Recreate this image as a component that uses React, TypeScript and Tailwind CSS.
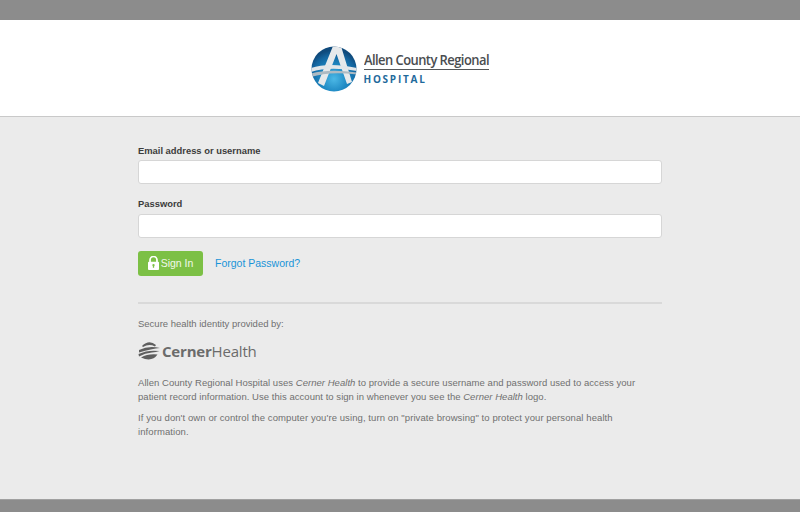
import React from "react";

function HospitalMark() {
  return (
    <svg width="46" height="46" viewBox="0 0 46 46" className="shrink-0">
      <defs>
        <radialGradient id="ball" cx="50%" cy="72%" r="64%">
          <stop offset="0%" stopColor="#4cb8e6" />
          <stop offset="45%" stopColor="#1f8ac4" />
          <stop offset="82%" stopColor="#14659f" />
          <stop offset="100%" stopColor="#0f4a7c" />
        </radialGradient>
        <clipPath id="c"><circle cx="23" cy="23" r="22.5" /></clipPath>
      </defs>
      <circle cx="23" cy="23" r="22.5" fill="url(#ball)" />
      <g clipPath="url(#c)">
        <path d="M22 0 L30 0 L41 36 L36 38 L25.5 8 L13 40 L7 37 Z" fill="#e6e9eb" />
        <path d="M0 22 Q18 16 46 22 L46 25 Q18 20 0 26 Z" fill="#e2e6e9" />
        <path d="M0 27.5 Q18 22.5 46 26.5 L46 28.5 Q18 25 0 31 Z" fill="#aebac2" />
      </g>
    </svg>
  );
}

function CernerMark() {
  return (
    <svg width="22" height="20" viewBox="0 0 22 20" className="shrink-0">
      <path d="M4 5 Q11 -2 18 4 L17 5.5 Q11 2.5 5 6 Z" fill="#5f5f5f" />
      <path d="M1 9 Q11 4 22 7 Q14 7.5 1 11.5 Z" fill="#5f5f5f" />
      <path d="M0.5 13 Q10 8.5 21.5 10 Q18 11 14 11.5 Q7 12 1 15.5 Z" fill="#5f5f5f" />
      <path d="M3 16.5 Q10 12.5 19.5 13.5 Q14 21.5 3 16.5 Z" fill="#5f5f5f" />
    </svg>
  );
}

function LockIcon() {
  return (
    <svg width="11" height="14" viewBox="0 0 12 15" className="-mt-px shrink-0">
      <path d="M2.2 7V4.2a3.8 3.8 0 0 1 7.6 0V7" fill="none" stroke="#fff" strokeWidth="1.9" />
      <path fillRule="evenodd" d="M1 6.2h10a1 1 0 0 1 1 1V14a1 1 0 0 1-1 1H1a1 1 0 0 1-1-1V7.2a1 1 0 0 1 1-1ZM6 8.6a1.3 1.3 0 0 0-.7 2.4v1.8h1.4V11A1.3 1.3 0 0 0 6 8.6Z" fill="#fff" />
    </svg>
  );
}

export default function App() {
  return (
    <div className="flex h-[512px] w-[800px] flex-col overflow-hidden bg-[#ebebeb] font-['Liberation_Sans',Arial,sans-serif]">
      <div className="h-5 shrink-0 bg-[#8c8c8c]" />
      <header className="flex h-[97px] shrink-0 items-start justify-center border-b border-[#c9c9c9] bg-white pt-[26px]">
        <div className="flex items-start gap-[7px]">
          <HospitalMark />
          <div className="flex w-[126px] flex-col pt-[5px]">
            <span className="origin-left scale-x-[0.925] whitespace-nowrap font-['Open_Sans',sans-serif] text-[14px] leading-[17px] font-semibold tracking-[-0.6px] text-[#4a4d50]">
              Allen County Regional
            </span>
            <div className="mt-px h-px w-[125px] bg-[#55585a]" />
            <span className="mt-[3px] font-['Open_Sans',sans-serif] text-[10px] leading-[12px] font-bold tracking-[1.75px] text-[#1f6a9c]">
              HOSPITAL
            </span>
          </div>
        </div>
      </header>

      <main className="flex min-h-0 flex-1 justify-center">
        <div className="flex w-[524px] flex-col pt-[27px]">
          <label className="text-[9.4px] leading-[13px] font-bold text-[#3c3c3c]">Email address or username</label>
          <input className="mt-[3px] h-[24px] w-full rounded-[3px] border border-[#d6d6d6] bg-white" />
          <label className="mt-[13px] text-[9.4px] leading-[13px] font-bold text-[#3c3c3c]">Password</label>
          <input type="password" className="mt-[4px] h-[24px] w-full rounded-[3px] border border-[#d6d6d6] bg-white" />

          <div className="mt-[13px] flex items-center gap-3">
            <button className="flex h-[25px] w-[65px] items-center justify-center gap-[2px] rounded-[3px] bg-[#7cc045] text-[10.5px] text-[#f1f8ea]">
              <LockIcon />
              <span>Sign In</span>
            </button>
            <a className="text-[10.5px] text-[#1a94d8]">Forgot Password?</a>
          </div>

          <div className="mt-[26px] h-[2px] w-full bg-[#d9d9d9]" />

          <p className="mt-[13px] text-[9.5px] leading-[13px] text-[#707070]">Secure health identity provided by:</p>

          <div className="mt-[9px] flex h-[24px] items-center gap-[2px]">
            <CernerMark />
            <span className="font-['Open_Sans',sans-serif] text-[15px] leading-[20px] tracking-[-0.2px] text-[#6b6b6b]">
              <span className="font-bold">Cerner</span>Health
            </span>
          </div>

          <p className="mt-[13px] max-w-[505px] text-[9.5px] leading-[14px] tracking-[0.04px] text-[#707070]">
            Allen County Regional Hospital uses <em>Cerner Health</em> to provide a secure username and password used to access your patient record information. Use this account to sign in whenever you see the <em>Cerner Health</em> logo.
          </p>
          <p className="mt-[7px] max-w-[505px] text-[9.5px] leading-[14px] tracking-[0.09px] text-[#707070]">
            If you don't own or control the computer you're using, turn on "private browsing" to protect your personal health information.
          </p>
        </div>
      </main>

      <div className="h-[13px] shrink-0 border-t border-[#a0a0a0] bg-[#8c8c8c]" />
    </div>
  );
}
